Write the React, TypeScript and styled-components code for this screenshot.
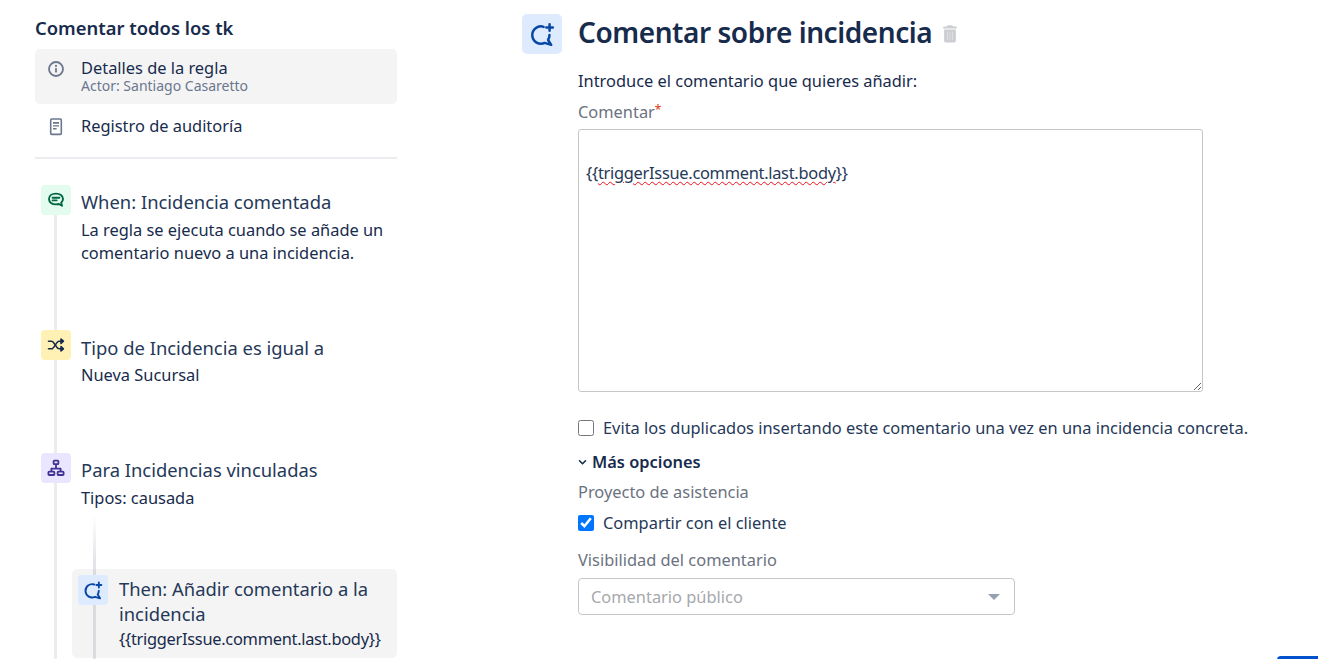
import React from 'react';
import styled, { createGlobalStyle } from 'styled-components';

const Global = createGlobalStyle`
  html, body { margin: 0; padding: 0; background: #fff; }
  body { font-family: "Noto Sans", "Open Sans", Arial, sans-serif; color: #172b4d; overflow: hidden; }
`;

const Page = styled.div`
  display: flex;
  height: 659px;
  overflow: hidden;
  background: #fff;
`;

const Sidebar = styled.aside`
  width: 362px;
  margin-left: 35px;
  flex: none;
  display: flex;
  flex-direction: column;
`;

const RuleTitle = styled.h2`
  margin: 16px 0 10px;
  font-size: 18.4px;
  line-height: 23px;
  font-weight: 600;
  color: #172b4d;
`;

const NavRow = styled.div<{ $active?: boolean }>`
  display: flex;
  align-items: flex-start;
  height: ${p => (p.$active ? 55 : 44)}px;
  box-sizing: border-box;
  padding-top: ${p => (p.$active ? 9 : 12)}px;
  background: ${p => (p.$active ? '#f4f4f5' : 'transparent')};
  border-radius: 5px;
`;

const NavIcon = styled.span`
  width: 42px;
  margin-right: 4px;
  flex: none;
  display: flex;
  justify-content: center;
  padding-top: 2px;
`;

const NavLabel = styled.div`
  font-size: 16.4px;
  line-height: 20px;
  color: #172b4d;
`;

const NavSub = styled.div`
  font-size: 14px;
  line-height: 16px;
  color: #6b778c;
`;

const Divider = styled.hr`
  margin: 9px 0 0;
  border: 0;
  height: 2px;
  background: #ebecf0;
`;

const Flow = styled.div`
  position: relative;
  flex: 1;
  display: flex;
  flex-direction: column;
  padding-top: 26px;
  &::before {
    content: '';
    position: absolute;
    left: 19px;
    top: 50px;
    bottom: 0;
    width: 3px;
    background: #ebecf0;
  }
`;

const Step = styled.div<{ $height: number }>`
  position: relative;
  display: flex;
  gap: 10px;
  height: ${p => p.$height}px;
  padding-left: 6px;
`;

const StepIcon = styled.span<{ $bg: string }>`
  width: 30px;
  height: 30px;
  flex: none;
  border-radius: 4px;
  background: ${p => p.$bg};
  display: flex;
  align-items: center;
  justify-content: center;
`;

const StepBody = styled.div`
  min-width: 0;
`;

const StepTitle = styled.div<{ $low?: boolean }>`
  font-size: 18.4px;
  line-height: 25px;
  padding-top: ${p => (p.$low ? 5 : 4)}px;
  margin-bottom: ${p => (p.$low ? 3 : 4)}px;
  color: #253858;
`;

const StepText = styled.div`
  font-size: 16.4px;
  line-height: 23px;
  color: #172b4d;
`;

const ChildZone = styled.div`
  position: relative;
  flex: 1;
  padding: 54px 0 0 37px;
  margin-top: -1px;
  &::before {
    content: '';
    position: absolute;
    left: 58px;
    top: 0;
    bottom: 0;
    width: 3px;
    background: linear-gradient(to bottom, #ffffff, #e4e5ea 45px);
  }
`;

const ActionCard = styled.div`
  position: relative;
  display: flex;
  gap: 11px;
  height: 89px;
  box-sizing: border-box;
  padding: 6px 6px 0;
  border-radius: 5px;
  background: rgba(0, 0, 0, 0.045);
`;

const ActionTitle = styled.div`
  font-size: 18.4px;
  line-height: 25px;
  padding-top: 1px;
  color: #253858;
`;

const ActionText = styled.div`
  font-size: 16.4px;
  line-height: 26px;
  letter-spacing: -0.28px;
  color: #172b4d;
`;

const Main = styled.main`
  margin-left: 125px;
  flex: none;
  width: 780px;
  padding-top: 14px;
`;

const Header = styled.header`
  display: flex;
  align-items: center;
`;

const HeaderIcon = styled.span`
  width: 40px;
  height: 40px;
  margin-right: 16px;
  border-radius: 5px;
  background: #deebff;
  display: flex;
  align-items: center;
  justify-content: center;
`;

const Heading = styled.h1`
  margin: -4px 0 0;
  font-size: 28px;
  line-height: 38px;
  font-weight: 600;
  letter-spacing: -0.44px;
  color: #172b4d;
`;

const Trash = styled.span`
  display: flex;
  margin-left: 11px;
  margin-top: -2px;
`;

const Form = styled.div`
  margin-left: 56px;
  display: flex;
  flex-direction: column;
`;

const Intro = styled.p`
  margin: 15px 0 8px;
  font-size: 16.4px;
  line-height: 24px;
  color: #172b4d;
`;

const FieldLabel = styled.label`
  display: block;
  font-size: 16.4px;
  line-height: 22px;
  color: #6b7280;
`;

const Req = styled.span`
  color: #de350b;
  font-size: 12px;
  position: relative;
  top: -4px;
`;

const CommentBox = styled.div`
  width: 625px;
  height: 263px;
  margin-top: 4px;
  box-sizing: border-box;
  border: 1px solid #c6c6c6;
  border-radius: 3px;
  padding: 31px 7px 0;
  font-size: 16.4px;
  line-height: 24px;
  letter-spacing: -0.28px;
  color: #253858;
  overflow: auto;
  resize: both;
`;

const Misspelled = styled.span`
  text-decoration: underline wavy #ee0f1e;
  text-decoration-thickness: 1px;
  text-underline-offset: 2px;
`;

const CheckRow = styled.label<{ $top: number }>`
  display: flex;
  align-items: center;
  gap: 9px;
  margin-top: ${p => p.$top}px;
  font-size: 16.4px;
  line-height: 24px;
  color: #253858;
`;

const Check = styled.input`
  width: 16px;
  height: 16px;
  margin: 0;
  flex: none;
  accent-color: #0075ff;
`;

const Toggle = styled.div`
  display: flex;
  align-items: center;
  gap: 5px;
  margin-top: 10px;
  font-size: 16.4px;
  line-height: 24px;
  font-weight: 600;
  color: #172b4d;
`;

const GroupLabel = styled(FieldLabel)<{ $top: number }>`
  margin-top: ${p => p.$top}px;
  line-height: 24px;
`;

const SelectBox = styled.div`
  width: 437px;
  height: 37px;
  margin-top: 6px;
  box-sizing: border-box;
  border: 1px solid #c6c6c6;
  border-radius: 4px;
  padding: 0 20px 0 12px;
  display: flex;
  align-items: center;
  justify-content: space-between;
  font-size: 16.4px;
  color: #a6a8ac;
`;

const Caret = styled.span`
  width: 0;
  height: 0;
  border-left: 6px solid transparent;
  border-right: 6px solid transparent;
  border-top: 6px solid #97a0af;
  margin-right: -6px;
`;

const CornerButton = styled.div`
  position: fixed;
  right: 0;
  bottom: -30px;
  width: 41px;
  height: 33px;
  background: #0052cc;
  border-radius: 4px 0 0 0;
`;

const CommentPlus = ({ size, stroke }: { size: number; stroke: number }) => (
  <svg width={size} height={size} viewBox="0 0 24 24" fill="none" stroke="#0747a6" strokeWidth={stroke} strokeLinecap="round" strokeLinejoin="round">
    <path d="M13.5 5.4A8 8 0 1 0 14.5 20.2L20.5 22L17.6 17.5A8 8 0 0 0 18.9 13" />
    <path d="M19 3v6M16 6h6" />
  </svg>
);

const InfoIcon = () => (
  <svg width="18" height="18" viewBox="0 0 18 18" fill="none">
    <circle cx="9" cy="9" r="7" stroke="#6b778c" strokeWidth="1.8" />
    <rect x="8.1" y="8" width="1.8" height="4.6" rx=".5" fill="#6b778c" />
    <circle cx="9" cy="5.9" r="1.1" fill="#6b778c" />
  </svg>
);

const PageIcon = () => (
  <svg width="14" height="18" viewBox="0 0 14 18" fill="none">
    <rect x="1.7" y="1" width="10.6" height="15.4" rx="1" stroke="#6b778c" strokeWidth="1.6" />
    <path d="M4 4h6v1.8H4zM4 7.2h6v1.4H4zM4 10h3.6v1.4H4z" fill="#6b778c" />
  </svg>
);

const ChatIcon = () => (
  <svg width="18" height="18" viewBox="0 0 18 18" fill="none" stroke="#006644" strokeWidth="1.9" strokeLinecap="round" strokeLinejoin="round">
    <path d="M9 2.6c-4 0-7 2.2-7 5.4s3 5.4 7 5.4c1 0 2-.1 2.8-.4l3.2 1.7-.8-3c1-.9 1.8-2.2 1.8-3.7 0-3.2-3-5.4-7-5.4z" />
    <path d="M5.6 6.8h6.8M5.6 9.4h4" />
  </svg>
);

const BranchIcon = () => (
  <svg width="18" height="18" viewBox="0 0 18 18" fill="none" stroke="#172b4d" strokeWidth="1.6" strokeLinecap="round" strokeLinejoin="round">
    <path d="M1.5 5.2h3c3 0 4.5 7.6 7.6 7.6h3" />
    <path d="M1.5 12.8h3c3 0 4.5-7.6 7.6-7.6h3" />
    <path d="M14 3l2.4 2.2L14 7.4zM14 10.6l2.4 2.2-2.4 2.2z" fill="#172b4d" />
  </svg>
);

const TreeIcon = () => (
  <svg width="18" height="18" viewBox="0 0 18 18" fill="none" stroke="#403294" strokeWidth="1.8" strokeLinejoin="round">
    <rect x="6.6" y="1.6" width="4.8" height="3.6" rx=".8" />
    <rect x="1.4" y="12.6" width="6" height="3.4" rx=".8" />
    <rect x="10.6" y="12.6" width="6" height="3.4" rx=".8" />
    <path d="M9 5.2v4.4M4.4 12.6V9.6h9.2v3" />
  </svg>
);

const TrashIcon = () => (
  <svg width="14" height="19" viewBox="0 0 15 19" preserveAspectRatio="none" fill="#ccced2">
    <path d="M5 1.2h5l.8 1.4H14a.8.8 0 0 1 .8.8v1H.2v-1a.8.8 0 0 1 .8-.8h3.2z" />
    <path d="M1.2 5.4h12.6v11.4c0 .9-.7 1.6-1.6 1.6H2.8c-.9 0-1.6-.7-1.6-1.6z" />
    <path d="M4.3 7.8h1v8h-1zM7 7.8h1v8H7zM9.7 7.8h1v8h-1z" fill="#dfe0e3" />
  </svg>
);

const Chevron = () => (
  <svg width="9" height="7" viewBox="0 0 9 7" fill="none" stroke="#172b4d" strokeWidth="1.6" strokeLinecap="round" strokeLinejoin="round">
    <path d="M1.5 1.8l3 3 3-3" />
  </svg>
);

export default function App() {
  return (
    <Page>
      <Global />
      <Sidebar>
        <RuleTitle>Comentar todos los tk</RuleTitle>
        <NavRow $active>
          <NavIcon><InfoIcon /></NavIcon>
          <div>
            <NavLabel>Detalles de la regla</NavLabel>
            <NavSub>Actor: Santiago Casaretto</NavSub>
          </div>
        </NavRow>
        <NavRow>
          <NavIcon><PageIcon /></NavIcon>
          <NavLabel>Registro de auditoría</NavLabel>
        </NavRow>
        <Divider />
        <Flow>
          <Step $height={145}>
            <StepIcon $bg="#e3fcef"><ChatIcon /></StepIcon>
            <StepBody>
              <StepTitle>When: Incidencia comentada</StepTitle>
              <StepText>La regla se ejecuta cuando se añade un comentario nuevo a una incidencia.</StepText>
            </StepBody>
          </Step>
          <Step $height={123}>
            <StepIcon $bg="#fff0b3"><BranchIcon /></StepIcon>
            <StepBody>
              <StepTitle $low>Tipo de Incidencia es igual a</StepTitle>
              <StepText>Nueva Sucursal</StepText>
            </StepBody>
          </Step>
          <Step $height={63}>
            <StepIcon $bg="#eae6ff"><TreeIcon /></StepIcon>
            <StepBody>
              <StepTitle>Para Incidencias vinculadas</StepTitle>
              <StepText>Tipos: causada</StepText>
            </StepBody>
          </Step>
          <ChildZone>
            <ActionCard>
              <StepIcon $bg="#deebff"><CommentPlus size={20} stroke={2.3} /></StepIcon>
              <StepBody>
                <ActionTitle>Then: Añadir comentario a la incidencia</ActionTitle>
                <ActionText>{'{{triggerIssue.comment.last.body}}'}</ActionText>
              </StepBody>
            </ActionCard>
          </ChildZone>
        </Flow>
      </Sidebar>
      <Main>
        <Header>
          <HeaderIcon><CommentPlus size={26} stroke={2.3} /></HeaderIcon>
          <Heading>Comentar sobre incidencia</Heading>
          <Trash><TrashIcon /></Trash>
        </Header>
        <Form>
          <Intro>Introduce el comentario que quieres añadir:</Intro>
          <FieldLabel>Comentar<Req>*</Req></FieldLabel>
          <CommentBox>{'{{'}<Misspelled>triggerIssue.comment.last.body</Misspelled>{'}}'}</CommentBox>
          <CheckRow $top={24}>
            <Check type="checkbox" />
            Evita los duplicados insertando este comentario una vez en una incidencia concreta.
          </CheckRow>
          <Toggle><Chevron />Más opciones</Toggle>
          <GroupLabel $top={6}>Proyecto de asistencia</GroupLabel>
          <CheckRow $top={7}>
            <Check type="checkbox" defaultChecked />
            Compartir con el cliente
          </CheckRow>
          <GroupLabel $top={13}>Visibilidad del comentario</GroupLabel>
          <SelectBox>Comentario público<Caret /></SelectBox>
        </Form>
      </Main>
      <CornerButton />
    </Page>
  );
}
